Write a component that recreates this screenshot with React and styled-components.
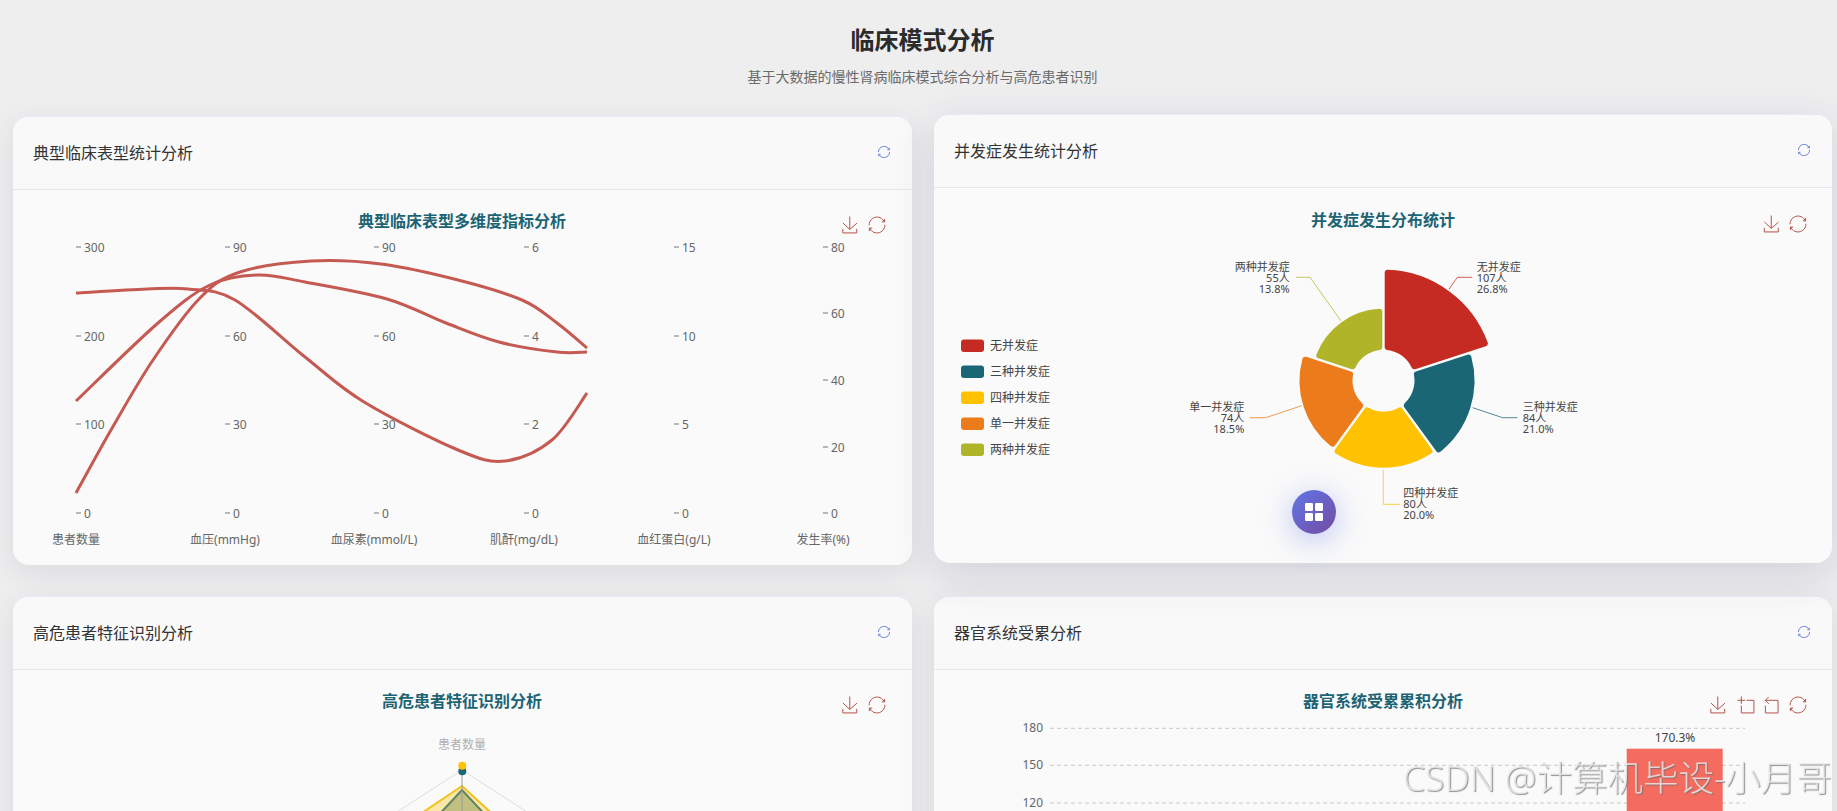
import React from 'react';
import styled, { createGlobalStyle } from 'styled-components';

const FONT = '"Noto Sans", "Noto Sans CJK SC", sans-serif';

const GlobalStyle = createGlobalStyle`
  html, body {
    margin: 0;
    height: 100%;
    overflow: hidden;
    background: #eeeeef;
    font-family: ${FONT};
  }
`;

const Page = styled.div`
  padding: 24px 5px 0 13px;
`;

const Header = styled.header`
  text-align: center;
  margin-bottom: 29px;
`;

const Title = styled.h1`
  margin: 0 0 11px;
  font-size: 24px;
  line-height: 32px;
  font-weight: 700;
  color: #2b2b2b;
`;

const Subtitle = styled.p`
  margin: 0;
  font-size: 14px;
  line-height: 20px;
  color: #6a6a6a;
`;

const Grid = styled.div`
  display: grid;
  grid-template-columns: 899px 898px;
  gap: 31px 22px;
`;

const Card = styled.section`
  height: 449px;
  box-sizing: border-box;
  border-radius: 16px;
  background: #fafafa;
  border-top: 1px solid #e9e9f6;
  transform: ${props => (props.$raised ? 'translateY(-2px)' : 'none')};
  box-shadow: ${props => (props.$raised
    ? '0 12px 40px rgba(60, 60, 110, 0.16)'
    : '0 8px 28px rgba(60, 60, 90, 0.1)')};
`;

const CardHeader = styled.div`
  height: 73px;
  box-sizing: border-box;
  padding: 0 22px 2px 20px;
  display: flex;
  align-items: center;
  justify-content: space-between;
  background: #f9f9fa;
  border-bottom: 1px solid #e6e6ec;
  border-radius: 16px 16px 0 0;
`;

const CardTitle = styled.h3`
  margin: 0;
  font-size: 16px;
  font-weight: 400;
  color: #333333;
`;

const ReloadIcon = styled.svg`
  width: 12px;
  height: 12px;
  fill: none;
  stroke: #6d85d8;
`;

const CardBody = styled.div`
  padding: 19px 20px 20px;
`;

const Chart = styled.svg`
  display: block;
  width: 100%;
  height: 336px;
  overflow: visible;
`;

const ChartTitle = styled.text`
  font-size: 16px;
  font-weight: 700;
  fill: #1c6474;
  text-anchor: middle;
  dominant-baseline: central;
`;

const ChartText = styled.text`
  font-size: ${props => props.$size || 12}px;
  fill: ${props => props.$color || '#666666'};
  text-anchor: ${props => props.$anchor || 'start'};
  dominant-baseline: central;
`;

const ToolPath = styled.path`
  fill: none;
  stroke: #b5544c;
  stroke-width: 1;
  vector-effect: non-scaling-stroke;
`;

const Fab = styled.div`
  position: fixed;
  left: 1292px;
  top: 490px;
  width: 44px;
  height: 44px;
  border-radius: 50%;
  display: flex;
  align-items: center;
  justify-content: center;
  background: linear-gradient(135deg, #5f77e6, #764ba2);
  box-shadow: 0 6px 30px rgba(102, 126, 234, 0.45);
`;

const Watermark = styled.div`
  position: fixed;
  left: 1403px;
  top: 753px;
  font-size: 35.5px;
  line-height: 48px;
  font-weight: 300;
  white-space: nowrap;
  color: rgba(236, 236, 238, 0.8);
  text-shadow: 1px 1px 1px rgba(110, 110, 110, 0.75);
`;

const ICONS = {
  save: 'M4.7,22.9L29.3,45.5L54.7,23.4M4.6,43.6L4.6,58L53.8,58L53.8,43.6M29.2,45.1L29.2,0',
  restore: 'M47,18.9h9.8V8.7 M56.3,20.1C52.1,9,40.5,0.6,26.8,2.1C12.6,3.7,1.6,16.2,2.1,30.6 M13,41.1H3.1v10.2 M3.7,39.9c4.2,11.1,15.8,19.5,29.5,18c14.2-1.6,25.2-14.1,24.7-28.5',
  zoom: 'M0,13.5h26.5 M13.5,26V0 M32.1,13.5H58V58H13.5V32.1',
  zoomBack: 'M22,1.4L9.9,13.5l12.3,12.3 M10.3,13.5H54.9v44.6H10.3v-26',
};

// smooth line through the points (catmull-rom to bezier)
const smooth = pts => {
  let d = `M${pts[0][0]},${pts[0][1]}`;
  for (let i = 0; i < pts.length - 1; i += 1) {
    const p0 = pts[i - 1] || pts[i];
    const p1 = pts[i];
    const p2 = pts[i + 1];
    const p3 = pts[i + 2] || p2;
    const c1x = p1[0] + (p2[0] - p0[0]) / 6;
    const c1y = p1[1] + (p2[1] - p0[1]) / 6;
    const c2x = p2[0] - (p3[0] - p1[0]) / 6;
    const c2y = p2[1] - (p3[1] - p1[1]) / 6;
    d += `C${c1x},${c1y} ${c2x},${c2y} ${p2[0]},${p2[1]}`;
  }
  return d;
};

// inset annular sector, stroked with a round join to get the rounded corners
const sector = (cx, cy, r0, r1, a0, a1) => {
  const round = 3;
  const gap = 1.2 + round;
  const inner = r0 + round;
  const outer = r1 - round;
  const pt = (r, a) => {
    const rad = (a * Math.PI) / 180;
    return `${cx + r * Math.sin(rad)},${cy - r * Math.cos(rad)}`;
  };
  const deg = r => (Math.asin(gap / r) * 180) / Math.PI;
  return [
    `M${pt(outer, a0 + deg(outer))}`,
    `A${outer},${outer} 0 0 1 ${pt(outer, a1 - deg(outer))}`,
    `L${pt(inner, a1 - deg(inner))}`,
    `A${inner},${inner} 0 0 0 ${pt(inner, a0 + deg(inner))}`,
    'Z',
  ].join(' ');
};

const Tools = ({ items, y }) => (
  <g>
    {items.map(([name, x]) => (
      <svg key={name} x={x - 8.5} y={y - 8.5} width="17" height="17" viewBox="0 0 60 60" overflow="visible">
        <ToolPath d={ICONS[name]} />
      </svg>
    ))}
  </g>
);

const AXES = [
  { x: 76, name: '患者数量', ticks: [[300, 247], [200, 336], [100, 424], [0, 513]] },
  { x: 225, name: '血压(mmHg)', ticks: [[90, 247], [60, 336], [30, 424], [0, 513]] },
  { x: 374, name: '血尿素(mmol/L)', ticks: [[90, 247], [60, 336], [30, 424], [0, 513]] },
  { x: 524, name: '肌酐(mg/dL)', ticks: [[6, 247], [4, 336], [2, 424], [0, 513]] },
  { x: 674, name: '血红蛋白(g/L)', ticks: [[15, 247], [10, 336], [5, 424], [0, 513]] },
  { x: 823, name: '发生率(%)', ticks: [[80, 247], [60, 313], [40, 380], [20, 447], [0, 513]] },
];

const LINES = [
  [[76, 293], [147, 289], [188, 289], [235, 300], [305, 357], [364, 402], [458, 450], [505, 461], [552, 440], [587, 393]],
  [[76, 401], [158, 323], [210, 285], [258, 275], [305, 282], [387, 299], [446, 323], [499, 342], [557, 352], [587, 352]],
  [[76, 493], [111, 430], [153, 360], [200, 298], [240, 272], [311, 261], [381, 264], [458, 280], [522, 300], [557, 323], [587, 348]],
];

const ParallelChart = () => (
  <Chart viewBox="33 209 859 336" preserveAspectRatio="xMinYMin">
    <ChartTitle x="462" y="221">典型临床表型多维度指标分析</ChartTitle>
    <Tools y={225} items={[['save', 850], ['restore', 877]]} />
    {AXES.map(axis => (
      <g key={axis.x}>
        {axis.ticks.map(([value, y]) => (
          <g key={value}>
            <line x1={axis.x} x2={axis.x + 5} y1={y} y2={y} stroke="#777" />
            <ChartText x={axis.x + 8} y={y}>{value}</ChartText>
          </g>
        ))}
        <ChartText x={axis.x} y="539" $anchor="middle">{axis.name}</ChartText>
      </g>
    ))}
    {LINES.map(points => (
      <path key={points[0][1]} d={smooth(points)} fill="none" stroke="#c45a52" strokeWidth="3" />
    ))}
  </Chart>
);

const PIE = { x: 1383.5, y: 380.7 };

const SLICES = [
  { name: '无并发症', color: '#c52b22', r: 111, from: 0, to: 72 },
  { name: '三种并发症', color: '#1a6675', r: 91, from: 72, to: 144 },
  { name: '四种并发症', color: '#fec200', r: 87, from: 144, to: 216 },
  { name: '单一并发症', color: '#ec7c1b', r: 84, from: 216, to: 288 },
  { name: '两种并发症', color: '#b0b428', r: 72, from: 288, to: 360 },
];

const PIE_LABELS = [
  { lines: ['无并发症', '107人', '26.8%'], x: 1476.7, y: 266, anchor: 'start', color: '#c52b22', leader: '1449,289.3 1457.3,277.3 1472.3,277.3' },
  { lines: ['三种并发症', '84人', '21.0%'], x: 1522.7, y: 406, anchor: 'start', color: '#1a6675', leader: '1472.7,407.7 1502.7,417.7 1517.3,417.7' },
  { lines: ['四种并发症', '80人', '20.0%'], x: 1403.3, y: 492.3, anchor: 'start', color: '#fec200', leader: '1383.3,470 1383.3,504.3 1400,504.3' },
  { lines: ['单一并发症', '74人', '18.5%'], x: 1244.3, y: 406, anchor: 'end', color: '#ec7c1b', leader: '1301.7,405.7 1265.7,417.7 1250,417.7' },
  { lines: ['两种并发症', '55人', '13.8%'], x: 1289.7, y: 266, anchor: 'end', color: '#b0b428', leader: '1341,321 1310,277.3 1296,277.3' },
];

const PieChart = () => (
  <Chart viewBox="954 207 858 336" preserveAspectRatio="xMinYMin">
    <ChartTitle x="1383" y="220">并发症发生分布统计</ChartTitle>
    <Tools y={224} items={[['save', 1771.5], ['restore', 1798]]} />
    {SLICES.map((slice, i) => (
      <g key={slice.name}>
        <path
          d={sector(PIE.x, PIE.y, 31, slice.r, slice.from, slice.to)}
          fill={slice.color}
          stroke={slice.color}
          strokeWidth="6"
          strokeLinejoin="round"
        />
        <rect x="961" y={339.5 + i * 26} width="23" height="12.5" rx="3" fill={slice.color} />
        <ChartText x="990" y={345 + i * 26} $color="#444">{slice.name}</ChartText>
      </g>
    ))}
    {PIE_LABELS.map(label => (
      <g key={label.lines[0]}>
        <polyline points={label.leader} fill="none" stroke={label.color} strokeOpacity="0.75" />
        {label.lines.map((line, i) => (
          <ChartText key={line} x={label.x} y={label.y + i * 11} $size={11} $color="#444" $anchor={label.anchor}>
            {line}
          </ChartText>
        ))}
      </g>
    ))}
  </Chart>
);

const RadarChart = () => (
  <Chart viewBox="33 689 859 336" preserveAspectRatio="xMinYMin">
    <ChartTitle x="462" y="701">高危患者特征识别分析</ChartTitle>
    <Tools y={705} items={[['save', 850], ['restore', 877]]} />
    <ChartText x="462" y="744" $anchor="middle" $color="#b0b0b0">患者数量</ChartText>
    <polyline points="383,821 462,770 541,821" fill="none" stroke="#dddddd" />
    <polygon points="462,786 410,821 500,821" fill="#ffc000" fillOpacity="0.32" stroke="#f2c21a" strokeWidth="2" />
    <polygon points="462,790 433,821 491,821" fill="#8a9a5a" fillOpacity="0.5" stroke="#5d8560" strokeWidth="2" />
    <line x1="462" x2="462" y1="772" y2="821" stroke="#9a9a9a" />
    <circle cx="462.3" cy="771.3" r="4" fill="#1a6675" />
    <circle cx="462.3" cy="765.7" r="4" fill="#fec200" />
  </Chart>
);

const GRID_LINES = [[180, 728.3], [150, 765.3], [120, 803]];

const BarChart = () => (
  <Chart viewBox="954 689 858 336" preserveAspectRatio="xMinYMin">
    <ChartTitle x="1383" y="701">器官系统受累累积分析</ChartTitle>
    <Tools y={705} items={[['save', 1718], ['zoom', 1746], ['zoomBack', 1771], ['restore', 1798]]} />
    {GRID_LINES.map(([value, y]) => (
      <g key={value}>
        <line x1="1050" x2="1745" y1={y} y2={y} stroke="#c8c8c8" strokeDasharray="4 3" />
        <ChartText x="1043" y={y - 1} $anchor="end">{value}</ChartText>
      </g>
    ))}
    <rect x="1626.7" y="748.7" width="96" height="200" fill="#f46c5f" />
    <ChartText x="1675" y="737" $anchor="middle" $color="#444">170.3%</ChartText>
  </Chart>
);

const ChartCard = ({ title, raised, children }) => (
  <Card $raised={raised}>
    <CardHeader>
      <CardTitle>{title}</CardTitle>
      <ReloadIcon viewBox="0 0 60 60">
        <path d={ICONS.restore} strokeWidth="1" vectorEffect="non-scaling-stroke" />
      </ReloadIcon>
    </CardHeader>
    <CardBody>{children}</CardBody>
  </Card>
);

const App = () => (
  <Page>
    <GlobalStyle />
    <Header>
      <Title>临床模式分析</Title>
      <Subtitle>基于大数据的慢性肾病临床模式综合分析与高危患者识别</Subtitle>
    </Header>
    <Grid>
      <ChartCard title="典型临床表型统计分析"><ParallelChart /></ChartCard>
      <ChartCard title="并发症发生统计分析" raised><PieChart /></ChartCard>
      <ChartCard title="高危患者特征识别分析"><RadarChart /></ChartCard>
      <ChartCard title="器官系统受累分析"><BarChart /></ChartCard>
    </Grid>
    <Fab>
      <svg width="18" height="18" viewBox="0 0 18 18" fill="#ffffff">
        <rect x="0" y="0" width="8" height="8" rx="1.2" />
        <rect x="10" y="0" width="8" height="8" rx="1.2" />
        <rect x="0" y="10" width="8" height="8" rx="1.2" />
        <rect x="10" y="10" width="8" height="8" rx="1.2" />
      </svg>
    </Fab>
    <Watermark>CSDN @计算机毕设-小月哥</Watermark>
  </Page>
);

export default App;
